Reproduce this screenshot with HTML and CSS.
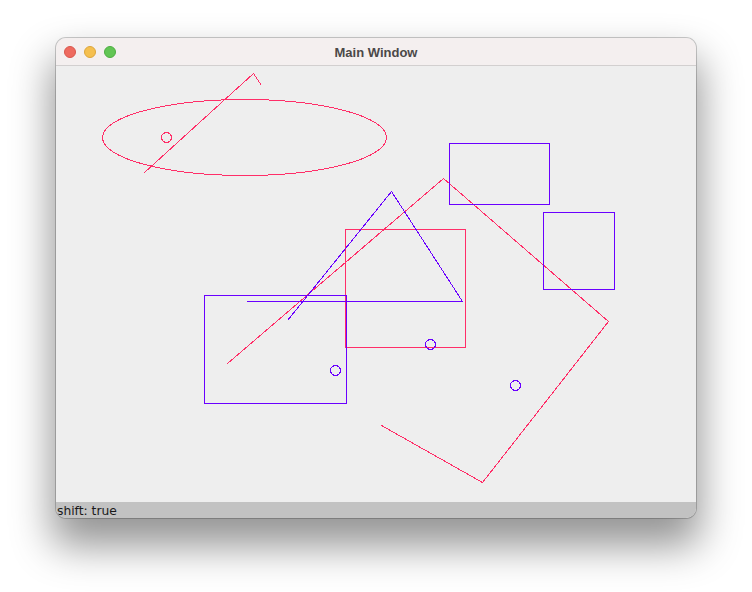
FILE: index.html
```html
<!DOCTYPE html>
<html>
<head>
<meta charset="utf-8">
<link rel="stylesheet" href="styles.css">
</head>
<body>
<div class="window">
  <div class="titlebar">
    <div class="lights">
      <span class="light red"></span>
      <span class="light yellow"></span>
      <span class="light green"></span>
    </div>
    <div class="title">Main Window</div>
  </div>
  <div class="canvas">
    <svg class="drawing" width="640" height="436" viewBox="56 66 640 436">
      <g class="pink">
        <ellipse cx="244.5" cy="137.5" rx="142" ry="38"/>
        <circle cx="166.5" cy="137.5" r="5"/>
        <polyline points="144.5,172.5 253.5,73.5 261.5,85.5"/>
        <rect x="345.5" y="229.5" width="120" height="118"/>
        <polyline points="227.5,363.5 443.5,178.5 608.5,321.5 482.5,482.5 381.5,425.5"/>
      </g>
      <g class="purple">
        <rect x="449.5" y="143.5" width="100" height="61"/>
        <rect x="543.5" y="212.5" width="71" height="77"/>
        <rect x="204.5" y="295.5" width="142" height="108"/>
        <polyline points="287.5,320.5 391.5,191.5 462.5,301.5 246.5,301.5"/>
        <circle cx="335.5" cy="370.5" r="5"/>
        <circle cx="430.5" cy="344.5" r="5"/>
        <circle cx="515.5" cy="385.5" r="5"/>
      </g>
    </svg>
  </div>
  <div class="statusbar">shift: true</div>
</div>
</body>
</html>
```

FILE: styles.css
```css
html, body {
  margin: 0;
  padding: 0;
  background: #ffffff;
}

body {
  padding: 38px 0 0 56px;
  height: 592px;
  box-sizing: border-box;
}

.window {
  width: 640px;
  height: 480px;
  display: flex;
  flex-direction: column;
  border-radius: 10px;
  overflow: hidden;
  box-shadow: 0 0 0 1px rgba(0, 0, 0, 0.2), 0 24px 40px 4px rgba(0, 0, 0, 0.42);
  background: #eeeeee;
}

.titlebar {
  height: 27px;
  flex: 0 0 27px;
  background: #f4efef;
  border-bottom: 1px solid #d2cfcf;
  display: flex;
  align-items: center;
  justify-content: center;
  position: relative;
}

.lights {
  position: absolute;
  left: 8px;
  top: 8px;
  display: flex;
  gap: 8px;
}

.light {
  width: 12px;
  height: 12px;
  border-radius: 50%;
  box-sizing: border-box;
}

.red { background: #ee6a5f; border: 1px solid #d9564c; }
.yellow { background: #f5bf4f; border: 1px solid #dca53b; }
.green { background: #62c554; border: 1px solid #4dad41; }

.title {
  font-family: "Liberation Sans", Arial, sans-serif;
  font-weight: bold;
  font-size: 13px;
  color: #4b4848;
  margin-top: 1px;
}

.canvas {
  flex: 1 1 auto;
  background: #eeeeee;
  overflow: hidden;
}

.drawing {
  display: block;
  shape-rendering: crispEdges;
}

.drawing .pink,
.drawing .purple {
  fill: none;
  stroke-width: 1;
}

.drawing .pink { stroke: #ff2e68; }
.drawing .purple { stroke: #6a00ff; }

.statusbar {
  height: 16px;
  flex: 0 0 16px;
  background: #c2c2c2;
  font-family: "DejaVu Sans", sans-serif;
  font-size: 12.3px;
  line-height: 19px;
  color: #1a1a1a;
  padding-left: 1px;
}
```
